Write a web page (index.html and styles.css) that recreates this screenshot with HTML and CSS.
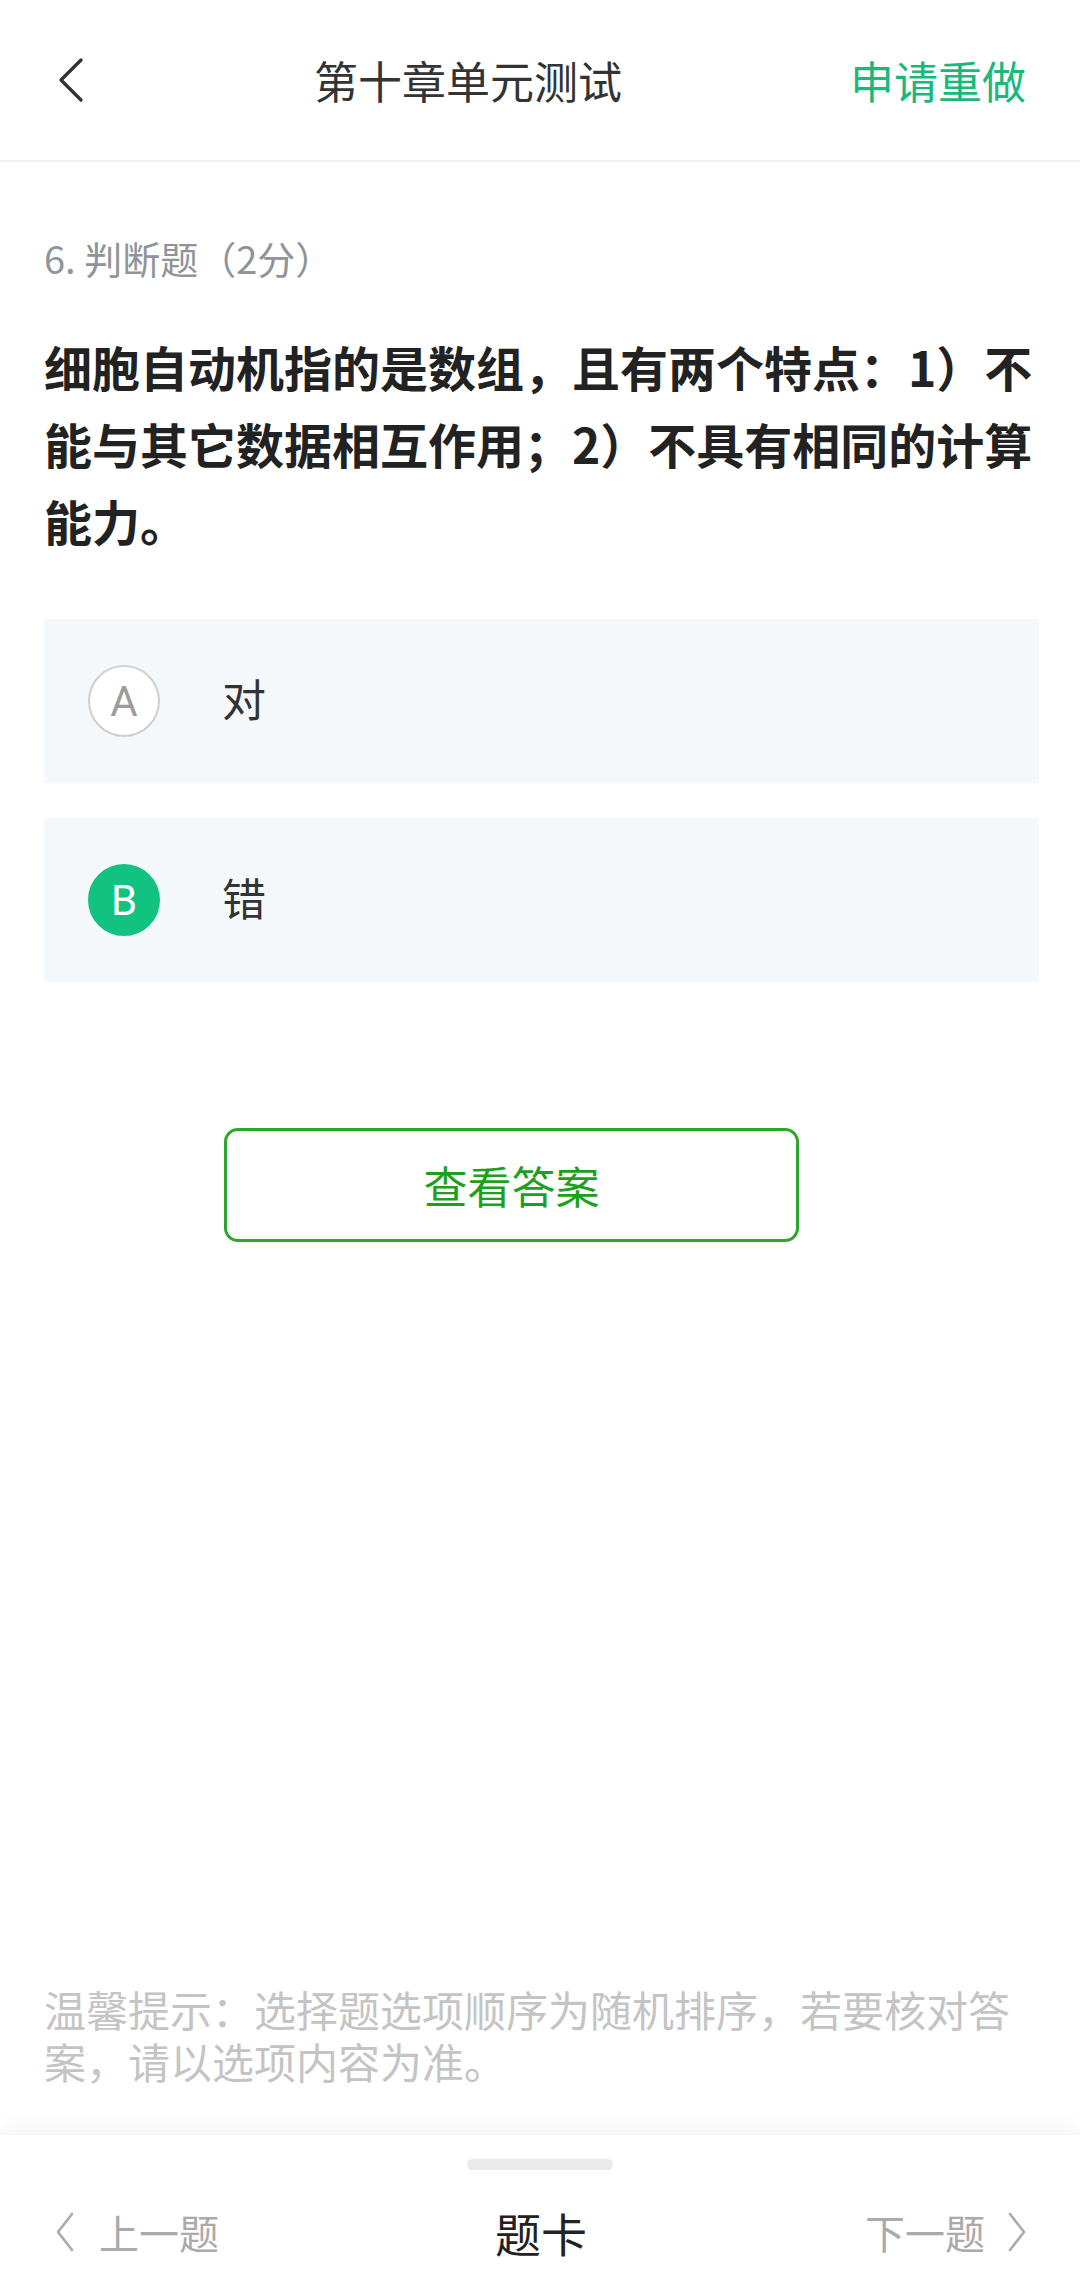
FILE: index.html
```html
<!DOCTYPE html>
<html>
<head>
  <title>第十章单元测试</title>
  <meta charset="UTF-8">
  <link rel="stylesheet" href="styles.css">
</head>
<body>
  <div class="top-bar">
    <div class="back-btn">
      <svg width="28" height="46" viewBox="0 0 28 46"><path d="M23 3 L3 23 L23 43" fill="none" stroke="#333" stroke-width="3.4" stroke-linecap="round" stroke-linejoin="round"/></svg>
    </div>
    <div class="top-title">第十章单元测试</div>
    <div class="top-action">申请重做</div>
  </div>

  <div class="main">
    <div class="question-type">6. 判断题（2分）</div>
    <div class="question-text">细胞自动机指的是数组，且有两个特点：1）不能与其它数据相互作用；2）不具有相同的计算能力。</div>

    <div class="option-list">
      <div class="option">
        <span class="option-mark">A</span>
        <span class="option-text">对</span>
      </div>
      <div class="option">
        <span class="option-mark selected">B</span>
        <span class="option-text">错</span>
      </div>
    </div>

    <div class="answer-btn">查看答案</div>
  </div>

  <div class="tip">温馨提示：选择题选项顺序为随机排序，若要核对答案，请以选项内容为准。</div>

  <div class="bottom-bar">
    <div class="handle"></div>
    <div class="bottom-nav">
      <div class="nav-prev">
        <svg width="20" height="40" viewBox="0 0 20 40"><path d="M17 2 L3 20 L17 38" fill="none" stroke="#aaa" stroke-width="2.6" stroke-linecap="round" stroke-linejoin="round"/></svg>
        <span>上一题</span>
      </div>
      <div class="nav-card">题卡</div>
      <div class="nav-next">
        <span>下一题</span>
        <svg width="20" height="40" viewBox="0 0 20 40"><path d="M3 2 L17 20 L3 38" fill="none" stroke="#aaa" stroke-width="2.6" stroke-linecap="round" stroke-linejoin="round"/></svg>
      </div>
    </div>
  </div>
</body>
</html>
```

FILE: styles.css
```css
body {
  width: 1080px;
  height: 2293px;
  margin: 0;
  display: flex;
  flex-direction: column;
  background: white;
  font-family: "Noto Sans CJK SC", "Noto Sans", sans-serif;
  color: #333;
  overflow: hidden;
}

/* 顶部栏 */
.top-bar {
  height: 160px;
  flex-shrink: 0;
  display: flex;
  align-items: center;
  padding: 0 54px 0 58px;
  border-bottom: 2px solid #f0f0f0;
}

.back-btn {
  width: 256px;
  display: flex;
  align-items: center;
}

.back-btn svg {
  display: block;
}

.top-title {
  font-size: 44px;
  color: #333;
}

.top-action {
  margin-left: auto;
  font-size: 44px;
  color: #19b97a;
}

/* 题目 */
.main {
  flex: 1;
  padding: 0 41px 0 44px;
}

.question-type {
  margin-top: 73px;
  font-size: 38px;
  line-height: 46px;
  color: #8e949a;
}

.question-text {
  margin-top: 47px;
  margin-right: 3px;
  font-size: 48px;
  line-height: 77px;
  font-weight: 700;
  color: #222;
}

/* 选项 */
.option-list {
  margin-top: 60px;
  display: flex;
  flex-direction: column;
  gap: 35px;
}

.option {
  height: 164px;
  display: flex;
  align-items: center;
  padding-left: 44px;
  background: #f4f8fb;
}

.option-mark {
  width: 72px;
  height: 72px;
  box-sizing: border-box;
  border-radius: 50%;
  border: 2px solid #cfcfcf;
  background: white;
  display: flex;
  align-items: center;
  justify-content: center;
  font-family: Roboto, "Noto Sans", sans-serif;
  font-size: 42px;
  color: #9c9c9c;
}

.option-mark.selected {
  border-color: #12c281;
  background: #12c281;
  color: white;
}

.option-text {
  margin-left: 62px;
  margin-top: -6px;
  font-size: 44px;
  color: #333;
}

/* 查看答案 */
.answer-btn {
  margin: 146px 0 0 180px;
  width: 575px;
  height: 114px;
  box-sizing: border-box;
  border: 3px solid #2ea52e;
  border-radius: 14px;
  display: flex;
  align-items: center;
  justify-content: center;
  font-size: 44px;
  color: #1f9f22;
}

/* 温馨提示 */
.tip {
  padding: 0 44px;
  margin-bottom: 48px;
  font-size: 42px;
  line-height: 52px;
  color: #c4c4c4;
}

/* 底部栏 */
.bottom-bar {
  height: 158px;
  flex-shrink: 0;
  background: white;
  box-shadow: 0 -6px 20px rgba(0, 0, 0, 0.05);
  display: flex;
  flex-direction: column;
  align-items: center;
}

.handle {
  margin-top: 24px;
  width: 146px;
  height: 11px;
  border-radius: 6px;
  background: #ebebeb;
}

.bottom-nav {
  flex: 1;
  align-self: stretch;
  display: grid;
  grid-template-columns: 1fr auto 1fr;
  align-items: center;
  padding: 0 53px 0 55px;
}

.nav-prev,
.nav-next {
  display: flex;
  align-items: center;
  font-size: 40px;
  color: #aaa;
}

.nav-prev {
  gap: 24px;
}

.nav-next {
  gap: 22px;
  justify-content: flex-end;
}

.nav-prev svg,
.nav-next svg {
  display: block;
}

.nav-card {
  font-size: 46px;
  color: #222;
}
```
